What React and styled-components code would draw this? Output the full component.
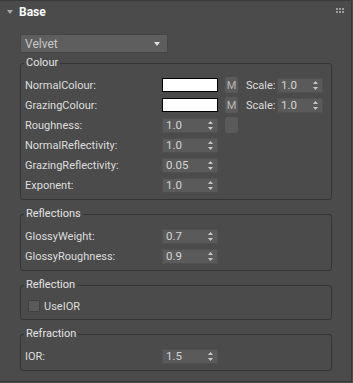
import React from 'react';
import styled, { createGlobalStyle } from 'styled-components';

const GlobalStyle = createGlobalStyle`
  html, body {
    margin: 0;
    padding: 0;
    background: #4b4b4b;
  }
  * {
    box-sizing: border-box;
  }
`;

//Outer rollout panel
const Panel = styled.div`
  width: 352px;
  height: 382px;
  background: #4b4b4b;
  border-top: 1px solid #3a3a3a;
  border-right: 1px solid #383838;
  border-bottom: 1px solid #383838;
  font-family: Roboto, 'Liberation Sans', sans-serif;
  font-size: 11px;
  color: #dedede;
  position: relative;
`;

//Rollout title bar
const Header = styled.div`
  height: 22px;
  display: flex;
  align-items: center;
  padding-left: 7px;
  gap: 6px;
`;

const Title = styled.span`
  font-size: 12px;
  font-weight: 700;
  color: #ffffff;
`;

const Grip = styled.div`
  position: absolute;
  top: 7px;
  right: 7px;
  display: grid;
  grid-template-columns: repeat(3, 2px);
  grid-auto-rows: 2px;
  gap: 1px;

  span {
    background: #9a9a9a;
  }
`;

const Body = styled.div`
  padding: 11px 19px 0 20px;
  display: flex;
  flex-direction: column;
`;

//Material type dropdown
const Dropdown = styled.div`
  width: 148px;
  height: 19px;
  background: #5e5e5e;
  border: 1px solid #454545;
  display: flex;
  align-items: center;
  justify-content: space-between;
  padding: 0 7px 0 4px;
  font-size: 12px;
  color: #c9c9c9;
  margin-bottom: 3px;
`;

//Group box
const Group = styled.fieldset`
  margin: 0 0 7px 0;
  padding: 5px 4px 4px 4px;
  border: 1px solid #343434;
  border-radius: 3px;
  min-width: 0;
`;

const Legend = styled.legend`
  padding: 0 2px;
  margin-left: -1px;
  line-height: 14px;
  font-size: 11px;
  color: #e4e4e4;
`;

const Row = styled.div`
  height: ${(p) => p.$h || 20}px;
  display: flex;
  align-items: center;
`;

const Label = styled.span`
  width: 137px;
  flex-shrink: 0;
  white-space: nowrap;
`;

const SpinBox = styled.div`
  width: ${(p) => p.$w}px;
  height: 15px;
  background: #5a5a5a;
  border: 1px solid #505050;
  display: flex;
  align-items: center;
  justify-content: space-between;
  padding: 0 4px 0 3px;
  color: #d4d4d4;
  font-size: 11.5px;
`;

const Swatch = styled.div`
  width: 56px;
  height: 14px;
  background: #ffffff;
  border: 1px solid #000000;
`;

const MapButton = styled.div`
  width: 13px;
  height: 16px;
  margin-left: 7px;
  background: #5a5a5a;
  border-radius: 2px;
  color: #b8b8b8;
  font-size: 11px;
  display: flex;
  align-items: center;
  justify-content: center;
`;

const ScaleLabel = styled.span`
  margin-left: 8px;
  width: 31px;
`;

const CheckBox = styled.div`
  width: 12px;
  height: 12px;
  margin-left: 3px;
  margin-right: 4px;
  background: #5a5a5a;
  border: 1px solid #404040;
`;

const DownArrow = ({ color = '#dcdcdc', size = 6 }) => (
  <svg width={size} height={size - 2} viewBox="0 0 6 4">
    <polygon points="0,0 6,0 3,4" fill={color} />
  </svg>
);

const SpinArrows = () => (
  <svg width="5" height="9" viewBox="0 0 5 9">
    <polygon points="2.5,0 5,3 0,3" fill="#c8c8c8" />
    <polygon points="0,6 5,6 2.5,9" fill="#c8c8c8" />
  </svg>
);

const Spinner = ({ value, width = 56 }) => (
  <SpinBox $w={width}>
    <span>{value}</span>
    <SpinArrows />
  </SpinBox>
);

const App = () => {
  return (
    <>
      <GlobalStyle />
      <Panel>
        <Header>
          <DownArrow color="#a8a8a8" size={6} />
          <Title>Base</Title>
        </Header>
        <Grip>
          {Array.from({ length: 6 }).map((_, i) => (
            <span key={i} />
          ))}
        </Grip>
        <Body>
          <Dropdown>
            <span>Velvet</span>
            <DownArrow color="#e0e0e0" size={6} />
          </Dropdown>

          <Group>
            <Legend>Colour</Legend>
            <Row>
              <Label>NormalColour:</Label>
              <Swatch />
              <MapButton>M</MapButton>
              <ScaleLabel>Scale:</ScaleLabel>
              <Spinner value="1.0" width={46} />
            </Row>
            <Row>
              <Label>GrazingColour:</Label>
              <Swatch />
              <MapButton>M</MapButton>
              <ScaleLabel>Scale:</ScaleLabel>
              <Spinner value="1.0" width={46} />
            </Row>
            <Row>
              <Label>Roughness:</Label>
              <Spinner value="1.0" />
              <MapButton />
            </Row>
            <Row>
              <Label>NormalReflectivity:</Label>
              <Spinner value="1.0" />
            </Row>
            <Row>
              <Label>GrazingReflectivity:</Label>
              <Spinner value="0.05" />
            </Row>
            <Row>
              <Label>Exponent:</Label>
              <Spinner value="1.0" />
            </Row>
          </Group>

          <Group>
            <Legend>Reflections</Legend>
            <Row>
              <Label>GlossyWeight:</Label>
              <Spinner value="0.7" />
            </Row>
            <Row>
              <Label>GlossyRoughness:</Label>
              <Spinner value="0.9" />
            </Row>
          </Group>

          <Group>
            <Legend>Reflection</Legend>
            <Row $h={18}>
              <CheckBox />
              <span>UseIOR</span>
            </Row>
          </Group>

          <Group>
            <Legend>Refraction</Legend>
            <Row>
              <Label>IOR:</Label>
              <Spinner value="1.5" />
            </Row>
          </Group>
        </Body>
      </Panel>
    </>
  );
};

export default App;
